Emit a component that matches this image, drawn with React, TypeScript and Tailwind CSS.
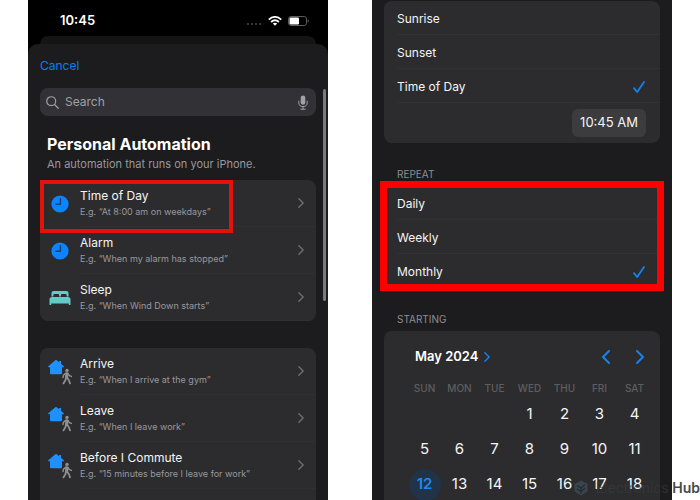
import { useState, type ReactNode } from "react";

interface Trigger {
  title: string;
  example: string;
  icon: ReactNode;
}

function ClockIcon() {
  return (
    <svg viewBox="0 0 18 18" className="size-[18px]">
      <circle cx="9" cy="9" r="8.6" fill="#0a84ff" />
      <path d="M9.4 3.8V9.3H5" fill="none" stroke="#173f70" strokeWidth="1.4" strokeLinecap="round" strokeLinejoin="round" />
    </svg>
  );
}

function BedIcon() {
  return (
    <svg viewBox="0 0 22 16" className="h-4 w-[22px]" fill="#66c9c6">
      <path d="M2.5 6.6V3Q2.5 1 4.5 1H17.5Q19.5 1 19.5 3V6.6H17.6V5.1Q17.6 4 16.5 4H13Q11.9 4 11.9 5.1V6.6H10.1V5.1Q10.1 4 9 4H5.5Q4.4 4 4.4 5.1V6.6Z" />
      <path d="M3 7H19Q21.5 7 21.5 9.6V15H19.8V13.6H2.2V15H0.5V9.6Q0.5 7 3 7Z" />
    </svg>
  );
}

function HomeWalkIcon() {
  return (
    <svg viewBox="0 0 25 26" className="h-[26px] w-[25px]">
      <path d="M7.3 1.2Q8 .6 8.7 1.2L11.2 3.3V2H13V4.8L15.8 7.2Q16.3 8.3 15.2 8.3H14V14.3Q14 15.3 13 15.3H3Q2 15.3 2 14.3V8.3H.8Q-.3 8.3 .3 7.2Z" fill="#1e90ff" />
      <circle cx="19" cy="11.4" r="1.7" fill="#8e8e93" />
      <g fill="none" stroke="#8e8e93" strokeLinecap="round" strokeLinejoin="round">
        <path d="M18.9 14.8L18.6 18.4" strokeWidth="3.2" />
        <path d="M18 14.2L15.6 16L15 18.4M19.8 14.4L21.4 16.6L23.4 17.4" strokeWidth="1.5" />
        <path d="M18 18.8L17.4 21.2L15.4 24.4M19.2 18.8L20.8 21L22 24.4" strokeWidth="1.8" />
      </g>
    </svg>
  );
}

function Chevron({ className, flip = false }: { className: string; flip?: boolean }) {
  return (
    <svg viewBox="0 0 8 14" className={className} fill="none" stroke="currentColor" strokeWidth="2" strokeLinecap="round" strokeLinejoin="round">
      <path d={flip ? "M7 1L1 7L7 13" : "M1 1L7 7L1 13"} />
    </svg>
  );
}

const scheduleTriggers: Trigger[] = [
  { title: "Time of Day", example: "E.g. “At 8:00 am on weekdays”", icon: <ClockIcon /> },
  { title: "Alarm", example: "E.g. “When my alarm has stopped”", icon: <ClockIcon /> },
  { title: "Sleep", example: "E.g. “When Wind Down starts”", icon: <BedIcon /> },
];

const travelTriggers: Trigger[] = [
  { title: "Arrive", example: "E.g. “When I arrive at the gym”", icon: <HomeWalkIcon /> },
  { title: "Leave", example: "E.g. “When I leave work”", icon: <HomeWalkIcon /> },
  { title: "Before I Commute", example: "E.g. “15 minutes before I leave for work”", icon: <HomeWalkIcon /> },
];

function TriggerRow({ title, example, icon }: Trigger) {
  return (
    <button type="button" className="flex h-[47px] w-full items-center text-left">
      <span className="flex w-10 shrink-0 justify-center">{icon}</span>
      <span className="flex h-full flex-1 items-center border-b border-[#303032] pr-3">
        <span className="flex-1 pt-0.5">
          <span className="block text-[12px] leading-4 text-[#f5f5f5]">{title}</span>
          <span className="block text-[9px] leading-4 text-[#98989d]">{example}</span>
        </span>
        <Chevron className="h-[10px] w-[6px] text-[#6c6c70]" />
      </span>
    </button>
  );
}

function StatusBar() {
  return (
    <header className="flex h-9 items-center justify-between pt-1.5 pr-[18px] pl-8">
      <span className="text-[13px] font-semibold text-white">10:45</span>
      <span className="flex items-center gap-1.5">
        <svg viewBox="0 0 16 4" className="mt-1.5 h-1 w-4" fill="#4a4a4a">
          <circle cx="2" cy="2" r="1" />
          <circle cx="6" cy="2" r="1" />
          <circle cx="10" cy="2" r="1" />
          <circle cx="14" cy="2" r="1" />
        </svg>
        <svg viewBox="0 0 14 10" className="h-[10px] w-[14px]" fill="none" stroke="#fff" strokeWidth="1.8">
          <path d="M.8 3.6Q7-1.8 13.2 3.6M3.1 6Q7 2.6 10.9 6" />
          <path d="M7 9.8L4.8 7.6Q7 6 9.2 7.6Z" fill="#fff" stroke="none" />
        </svg>
        <svg viewBox="0 0 22 10" className="h-[10px] w-[22px]">
          <rect x=".5" y=".5" width="18" height="9" rx="2.4" fill="none" stroke="#5c5c5c" />
          <rect x="1.5" y="1.5" width="9.5" height="7" rx="1.2" fill="#fff" />
          <path d="M20.2 3.6V6.4" stroke="#5c5c5c" />
        </svg>
      </span>
    </header>
  );
}

function AutomationPicker() {
  return (
    <section className="flex min-w-0 flex-col bg-black">
      <StatusBar />
      <div className="mx-3 h-2 rounded-t-lg bg-[#141415]" />
      <div className="relative flex-1 rounded-t-[10px] bg-[#1c1c1e] px-3 pt-3">
        <button type="button" className="block text-[12px] leading-5 text-[#0a7ff0]">
          Cancel
        </button>

        <label className="mt-3 flex h-7 items-center gap-1.5 rounded-lg bg-[#323236] pr-2 pl-1.5">
          <svg viewBox="0 0 14 14" className="size-[13px] shrink-0" fill="none" stroke="#a0a0a5" strokeWidth="1.3" strokeLinecap="round">
            <circle cx="5.6" cy="5.6" r="4.8" />
            <path d="M9.2 9.2L13.2 13.2" />
          </svg>
          <input
            type="search"
            aria-label="Search"
            placeholder="Search"
            className="min-w-0 flex-1 bg-transparent text-[12px] text-white outline-none placeholder:text-[#a0a0a5]"
          />
          <svg viewBox="0 0 10 15" className="h-[15px] w-[10px] shrink-0" fill="none" stroke="#a0a0a5" strokeLinecap="round">
            <rect x="2.7" y=".4" width="4.6" height="9.4" rx="2.3" fill="#a0a0a5" stroke="none" />
            <path d="M.8 6.2V7.6Q.8 11.6 5 11.6Q9.2 11.6 9.2 7.6V6.2M5 11.6V14M2.8 14.2H7.2" />
          </svg>
        </label>

        <h1 className="mt-4 pl-[7px] text-[16px] leading-6 font-bold text-white">Personal Automation</h1>
        <p className="pl-[7px] text-[11px] leading-4 text-[#98989d]">An automation that runs on your iPhone.</p>

        <div className="mt-2 overflow-hidden rounded-lg bg-[#2c2c2e]">
          {scheduleTriggers.map((trigger) => (
            <TriggerRow key={trigger.title} {...trigger} />
          ))}
        </div>
        <div className="pointer-events-none absolute top-[136px] left-3 h-[53px] w-[193px] border-4 border-[#e3120b]" />

        <div className="mt-[27px] overflow-hidden rounded-t-lg bg-[#2c2c2e] pb-8">
          {travelTriggers.map((trigger) => (
            <TriggerRow key={trigger.title} {...trigger} />
          ))}
        </div>

        {/* Scroll indicator */}
        <div className="absolute top-[45px] right-0.5 h-[212px] w-[3px] rounded-full bg-[#7a7a7c]" />
      </div>
    </section>
  );
}

interface ChoiceProps {
  name: string;
  options: string[];
  value: string;
  onChange: (value: string) => void;
}

function ChoiceList({ name, options, value, onChange }: ChoiceProps) {
  return (
    <>
      {options.map((option) => (
        <label key={option} className="ml-[13px] flex h-[34px] items-center justify-between border-b border-[#323234] pt-0.5 pr-[15px] text-[12px] text-[#f5f5f5]">
          {option}
          <input
            type="radio"
            name={name}
            checked={value === option}
            onChange={() => onChange(option)}
            className="peer size-0 appearance-none"
          />
          <svg viewBox="0 0 12 12" className="hidden size-3 peer-checked:block" fill="none" stroke="#1583ec" strokeWidth="1.8" strokeLinecap="round" strokeLinejoin="round">
            <path d="M1 7.2L4.2 11L11 1" />
          </svg>
        </label>
      ))}
    </>
  );
}

const weekdays = ["SUN", "MON", "TUE", "WED", "THU", "FRI", "SAT"];

const weeks = [
  [null, null, null, 1, 2, 3, 4],
  [5, 6, 7, 8, 9, 10, 11],
  [12, 13, 14, 15, 16, 17, 18],
];

function Calendar() {
  const [selected, setSelected] = useState(12);

  return (
    <div className="flex-1 rounded-t-lg bg-[#2c2c2e] pt-3 pr-2 pl-[23px]">
      <div className="flex h-7 items-center justify-between px-2">
        <button type="button" className="flex items-center gap-1.5 text-[13px] font-semibold text-white">
          May 2024
          <Chevron className="h-[10px] w-[6px] text-[#1583ec]" />
        </button>
        <span className="flex gap-[26px] text-[#1583ec]">
          <button type="button" aria-label="Previous month">
            <Chevron flip className="h-[14px] w-2" />
          </button>
          <button type="button" aria-label="Next month">
            <Chevron className="h-[14px] w-2" />
          </button>
        </span>
      </div>
      <table className="mt-2 w-full table-fixed text-center">
        <thead>
          <tr className="h-[18px] text-[10px] text-[#5e5e61]">
            {weekdays.map((day) => (
              <th key={day} scope="col" className="p-0 font-medium">
                {day}
              </th>
            ))}
          </tr>
        </thead>
        <tbody>
          {weeks.map((week, i) => (
            <tr key={i} className="h-[35px]">
              {week.map((day, j) => (
                <td key={j} className="p-0">
                  {day && (
                    <button
                      type="button"
                      onClick={() => setSelected(day)}
                      className={
                        day === selected
                          ? "size-8 rounded-full bg-[#203349] align-middle text-[15px] font-semibold text-[#1b88f5]"
                          : "size-8 align-middle text-[15px] text-[#f5f5f5]"
                      }
                    >
                      {day}
                    </button>
                  )}
                </td>
              ))}
            </tr>
          ))}
        </tbody>
      </table>
    </div>
  );
}

function SchedulePicker() {
  const [trigger, setTrigger] = useState("Time of Day");
  const [repeat, setRepeat] = useState("Monthly");

  return (
    <section className="flex min-w-0 flex-col bg-[#1c1c1e] px-3 pt-px">
      <div className="rounded-lg bg-[#2c2c2e]">
        <ChoiceList name="trigger" options={["Sunrise", "Sunset", "Time of Day"]} value={trigger} onChange={setTrigger} />
        <div className="flex h-10 items-center justify-end pr-3.5">
          <button type="button" className="h-7 rounded-md bg-[#3c3c3f] px-2 text-[13px] text-[#f5f5f5]">
            10:45 AM
          </button>
        </div>
      </div>

      <h2 className="mt-[23px] pl-[13px] text-[10px] leading-4 text-[#8e8e93]">REPEAT</h2>
      <div className="relative mt-1 rounded-lg bg-[#2c2c2e]">
        <ChoiceList name="repeat" options={["Daily", "Weekly", "Monthly"]} value={repeat} onChange={setRepeat} />
        <div className="pointer-events-none absolute -inset-x-1 -top-[5px] -bottom-[3px] border-[7px] border-[#ff0000]" />
      </div>

      <h2 className="mt-[23px] mb-1 pl-[13px] text-[10px] leading-4 text-[#8e8e93]">STARTING</h2>
      <Calendar />
    </section>
  );
}

export default function App() {
  return (
    <main className="relative grid h-screen grid-cols-2 gap-11 overflow-hidden bg-white px-7 font-['Inter',sans-serif]">
      <AutomationPicker />
      <SchedulePicker />

      {/* Watermark */}
      <div className="pointer-events-none absolute right-0 bottom-0.5 flex items-center gap-2 text-[14px] leading-5 font-semibold">
        <svg viewBox="0 0 14 16" className="h-4 w-3.5 opacity-80">
          <path d="M7 .5L13.5 4V11.5L7 15.5L.5 11.5V4Z" fill="#3b4c55" />
          <path d="M3 5.5L7 8L11 4.5M3 9L7 11.5L11 8M7 8V14" fill="none" stroke="#222c32" strokeWidth="1.2" />
        </svg>
        <span className="whitespace-nowrap text-[#44484c]">
          <span className="font-normal text-[#3a3d40]/60">Electronics</span> Hub
        </span>
      </div>
    </main>
  );
}
